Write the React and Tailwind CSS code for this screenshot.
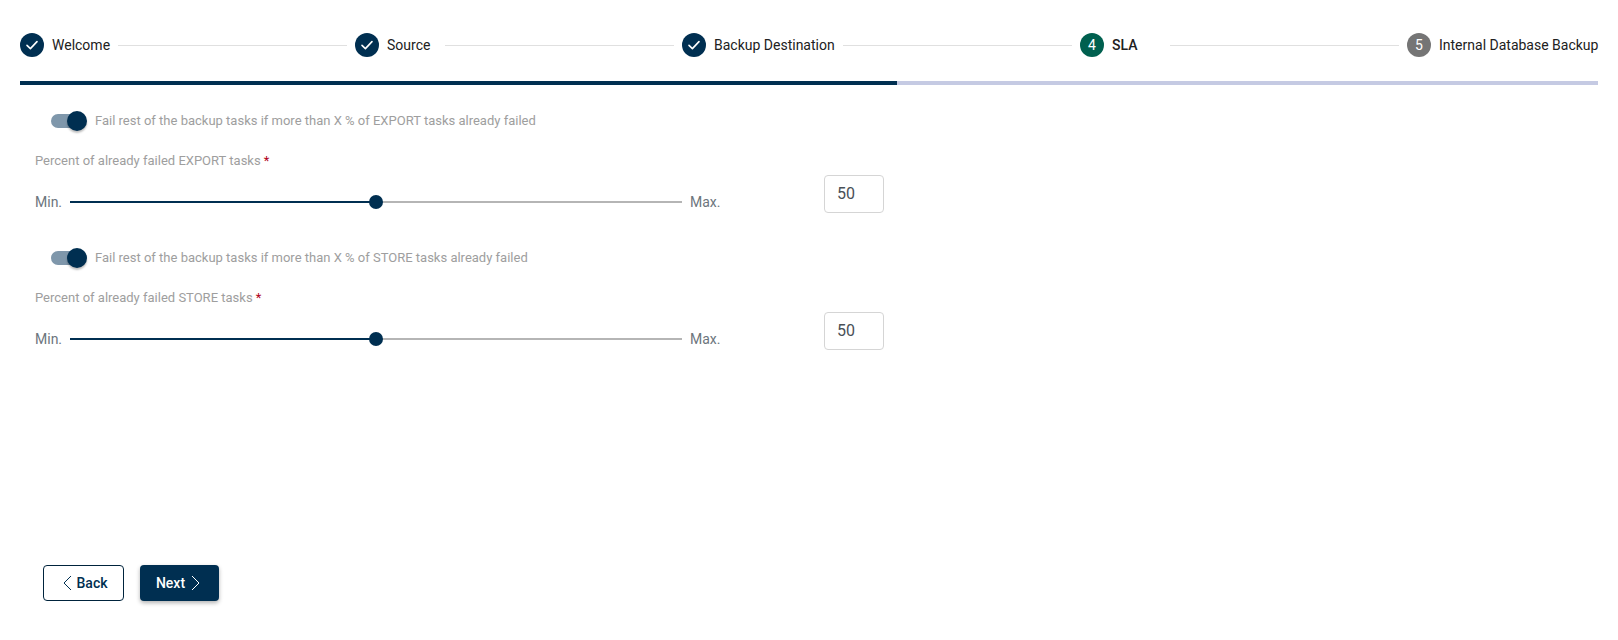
import React from "react";

const Check = () => (
  <svg width="14" height="14" viewBox="0 0 14 14" fill="none" stroke="white" strokeWidth="1.6" strokeLinecap="round" strokeLinejoin="round">
    <path d="M2 7.4 5.4 10.6 12 3.6" />
  </svg>
);

function Step({ icon, label, labelW, bg, last, bold }) {
  return (
    <>
      <div className={`w-6 h-6 rounded-full flex items-center justify-center text-white text-sm shrink-0 ${bg}`}>{icon}</div>
      <div className={`ml-2 shrink-0 text-sm leading-6 text-[#212121] whitespace-nowrap ${bold ? "font-medium" : ""} ${labelW}`}>{label}</div>
      {!last && <div className="flex-1 h-px bg-[#e0e0e0] mr-2" />}
    </>
  );
}

function Row({ word }) {
  return (
    <div>
      <div className="flex items-center h-6 pl-[31px]">
        <div className="relative w-[36px] h-6 flex items-center shrink-0">
          <div className="w-[34px] h-[14px] rounded-full bg-[#7f97ab]" />
          <div className="absolute right-0 top-[2px] w-5 h-5 rounded-full bg-[#002f51] shadow-[0_2px_2px_rgba(0,0,0,0.25)]" />
        </div>
        <span className="ml-2 text-[13px] text-[#9e9e9e]">Fail rest of the backup tasks if more than X % of {word} tasks already failed</span>
      </div>
      <div className="mt-[20px] pl-[15px] text-[13px] leading-4 text-[#9e9e9e]">
        Percent of already failed {word} tasks <span className="text-[#b00020]">*</span>
      </div>
      <div className="flex items-start pl-[15px] mt-[16px]">
        <div className="flex items-center w-[689px] h-[14px] mt-[10px] text-sm text-[#6c757d]">
          <span className="w-[35px] shrink-0">Min.</span>
          <div className="w-[306px] h-[2px] bg-[#002f51]" />
          <div className="relative z-10 w-[14px] h-[14px] rounded-full bg-[#002f51] shrink-0 -mx-[7px]" />
          <div className="flex-1 h-[2px] bg-[#b5b5b5]" />
          <span className="ml-[8px] w-[34px] shrink-0">Max.</span>
        </div>
        <div className="ml-[100px] -mt-[10px] w-[60px] h-[38px] border border-[#d5d5d5] rounded-[4px] pl-[12px] flex items-center text-base text-[#495057]">50</div>
      </div>
    </div>
  );
}

export default function App() {
  return (
    <div className="w-[1618px] h-[640px] bg-white px-5 overflow-hidden" style={{ fontFamily: "Roboto, sans-serif" }}>
      <div className="flex items-center pt-[33px]">
        <Step icon={<Check />} label="Welcome" labelW="w-[66px]" bg="bg-[#002f51]" />
        <Step icon={<Check />} label="Source" labelW="w-[58px]" bg="bg-[#002f51]" />
        <Step icon={<Check />} label="Backup Destination" labelW="w-[129px]" bg="bg-[#002f51]" />
        <Step icon="4" label="SLA" labelW="w-[58px]" bg="bg-[#00604f]" bold />
        <Step icon="5" label="Internal Database Backup" labelW="w-[159px]" bg="bg-[#757575]" last />
      </div>
      <div className="flex h-1 mt-[24px]">
        <div className="w-[877px] bg-[#002f51]" />
        <div className="flex-1 bg-[#c5cae3]" />
      </div>
      <div className="mt-[24px] flex flex-col gap-[33px]">
        <Row word="EXPORT" />
        <Row word="STORE" />
      </div>
      <div className="flex gap-4 pl-[23px] mt-[215px]">
        <button className="w-[81px] h-[36px] border border-[#00233c] rounded-[4px] flex items-center justify-center gap-1 text-sm font-medium text-[#002f51]">
          <svg width="14" height="18" viewBox="0 0 14 18" fill="none" stroke="#002f51" strokeWidth="1"><path d="M11 2 4 9l7 7" /></svg>
          <span className="-ml-px">Back</span>
        </button>
        <button className="w-[79px] h-[36px] bg-[#002f51] rounded-[4px] flex items-center justify-center gap-1 text-sm font-medium text-white shadow-[0_2px_4px_rgba(0,0,0,0.3)]">
          Next
          <svg width="14" height="18" viewBox="0 0 14 18" fill="none" stroke="white" strokeWidth="1"><path d="M3 2l7 7-7 7" /></svg>
        </button>
      </div>
    </div>
  );
}
